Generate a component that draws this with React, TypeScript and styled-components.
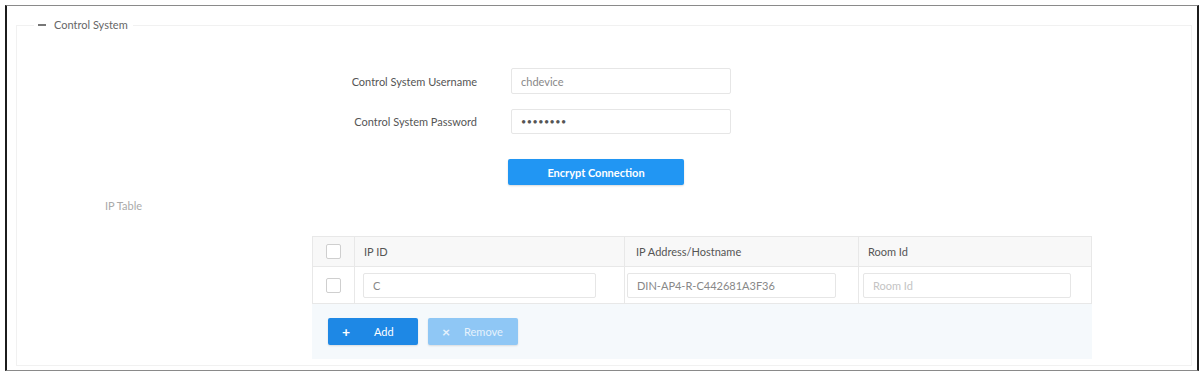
import React, { useState } from 'react';
import styled, { createGlobalStyle } from 'styled-components';

const GlobalStyle = createGlobalStyle`
  html, body {
    margin: 0;
    padding: 0;
    background: #ffffff;
  }
  body {
    font-family: Lato, 'Open Sans', sans-serif;
    font-size: 11px;
    color: #555;
  }
`;

const Frame = styled.div`
  box-sizing: border-box;
  margin: 5px 0 0 5px;
  width: 1194px;
  height: 366px;
  border-left: 2px solid #1c1c1c;
  border-right: 2px solid #1c1c1c;
  border-top: 1px solid #8a8a8a;
  border-bottom: 1px solid #8a8a8a;
  padding: 12px 5px 4px 9px;
  display: flex;
`;

const Section = styled.fieldset`
  flex: 1;
  margin: 0;
  padding: 0;
  border: 1px solid #f1f1f1;
  display: flex;
  flex-direction: column;
  min-width: 0;
`;

const Legend = styled.legend`
  margin-left: 17px;
  padding: 0 5px 0 4px;
  line-height: 14px;
  font-size: 11px;
  color: #666;
  display: flex;
  align-items: center;
`;

const Collapse = styled.span`
  display: inline-block;
  width: 8px;
  height: 1.5px;
  background: #777;
  margin-right: 8px;
`;

const FormGrid = styled.div`
  margin: 36px 0 0 300px;
  display: grid;
  grid-template-columns: 160px 220px;
  column-gap: 34px;
  row-gap: 15px;
  align-items: center;
`;

const Label = styled.label`
  text-align: right;
  color: #555;
  font-size: 11px;
`;

const TextInput = styled.input<{ h?: number }>`
  box-sizing: border-box;
  width: 100%;
  height: ${p => p.h || 26}px;
  border: 1px solid #e6e6e6;
  border-radius: 2px;
  padding: 0 9px;
  font-family: Lato, sans-serif;
  font-size: 11px;
  color: #888;
  outline: none;
  background: #fff;

  &[type='password'] {
    color: #555;
    font-size: 9px;
    letter-spacing: 0.5px;
  }

  &::placeholder {
    color: #c4c4c4;
  }
`;

const PrimaryButton = styled.button`
  grid-column: 2;
  margin-top: 10px;
  margin-left: -3px;
  width: 176px;
  height: 26px;
  border: none;
  border-radius: 2px;
  background: #2196f3;
  color: #fff;
  font-family: Lato, sans-serif;
  font-weight: 700;
  font-size: 11px;
  box-shadow: 0 1px 2px rgba(0, 0, 0, 0.15);
`;

const SubTitle = styled.div`
  margin: 14px 0 0 88px;
  line-height: 14px;
  color: #aaa;
  font-size: 11px;
`;

const Table = styled.div`
  margin: 23px 0 0 295px;
  width: 780px;
  display: flex;
  flex-direction: column;
`;

const GridRow = styled.div<{ header?: boolean }>`
  display: grid;
  grid-template-columns: 41px 270px 234px 235px;
  height: ${p => (p.header ? 31 : 37)}px;
  background: ${p => (p.header ? '#f8f8f8' : '#fff')};
  border: 1px solid #e8e8e8;
  border-top: ${p => (p.header ? '1px solid #e8e8e8' : 'none')};
  box-sizing: border-box;
`;

const Cell = styled.div<{ pl?: number; pr?: number }>`
  display: flex;
  align-items: center;
  padding: 0 ${p => p.pr ?? 12}px 0 ${p => p.pl ?? 10}px;
  border-left: 1px solid #e8e8e8;
  color: #555;
  font-size: 11px;

  &:first-child {
    border-left: none;
    justify-content: center;
    padding: 0;
  }
`;

const Check = styled.span`
  display: inline-block;
  box-sizing: border-box;
  width: 15px;
  height: 15px;
  border: 1px solid #cfcfcf;
  border-radius: 2px;
  background: #fff;
`;

const Footer = styled.div`
  height: 55px;
  background: #f5f9fc;
  display: flex;
  align-items: center;
  gap: 10px;
  padding-left: 16px;
`;

const ActionButton = styled.button<{ disabled?: boolean; gap: number }>`
  width: 90px;
  height: 27px;
  border: none;
  border-radius: 2px;
  background: ${p => (p.disabled ? '#8fc7f5' : '#1e88e5')};
  color: ${p => (p.disabled ? '#e6f2fc' : '#fff')};
  font-family: Lato, sans-serif;
  font-size: 11px;
  display: flex;
  align-items: center;
  padding: 0 0 0 14px;
  gap: ${p => p.gap}px;
  box-shadow: 0 1px 2px rgba(0, 0, 0, 0.12);
`;

const Glyph = styled.span`
  font-size: 14px;
  font-weight: 700;
  width: 8px;
  text-align: center;
`;

export default function App() {
  const [username, setUsername] = useState('chdevice');
  const [password, setPassword] = useState('password');
  const [ipId, setIpId] = useState('C');
  const [host, setHost] = useState('DIN-AP4-R-C442681A3F36');
  const [roomId, setRoomId] = useState('');

  return (
    <>
      <GlobalStyle />
      <Frame>
        <Section>
          <Legend>
            <Collapse />
            Control System
          </Legend>

          <FormGrid>
            <Label>Control System Username</Label>
            <TextInput value={username} onChange={e => setUsername(e.target.value)} />
            <Label>Control System Password</Label>
            <TextInput
              h={25}
              type="password"
              value={password}
              onChange={e => setPassword(e.target.value)}
            />
            <PrimaryButton>Encrypt Connection</PrimaryButton>
          </FormGrid>

          <SubTitle>IP Table</SubTitle>

          <Table>
            <GridRow header>
              <Cell><Check /></Cell>
              <Cell pl={9}>IP ID</Cell>
              <Cell pl={11}>IP Address/Hostname</Cell>
              <Cell pl={9}>Room Id</Cell>
            </GridRow>
            <GridRow>
              <Cell><Check /></Cell>
              <Cell pl={8} pr={28}>
                <TextInput h={25} value={ipId} onChange={e => setIpId(e.target.value)} />
              </Cell>
              <Cell pl={2} pr={22}>
                <TextInput h={25} value={host} onChange={e => setHost(e.target.value)} />
              </Cell>
              <Cell pl={4} pr={22}>
                <TextInput
                  h={25}
                  placeholder="Room Id"
                  value={roomId}
                  onChange={e => setRoomId(e.target.value)}
                />
              </Cell>
            </GridRow>
            <Footer>
              <ActionButton gap={24}>
                <Glyph>+</Glyph>
                Add
              </ActionButton>
              <ActionButton disabled gap={14}>
                <Glyph>×</Glyph>
                Remove
              </ActionButton>
            </Footer>
          </Table>
        </Section>
      </Frame>
    </>
  );
}
